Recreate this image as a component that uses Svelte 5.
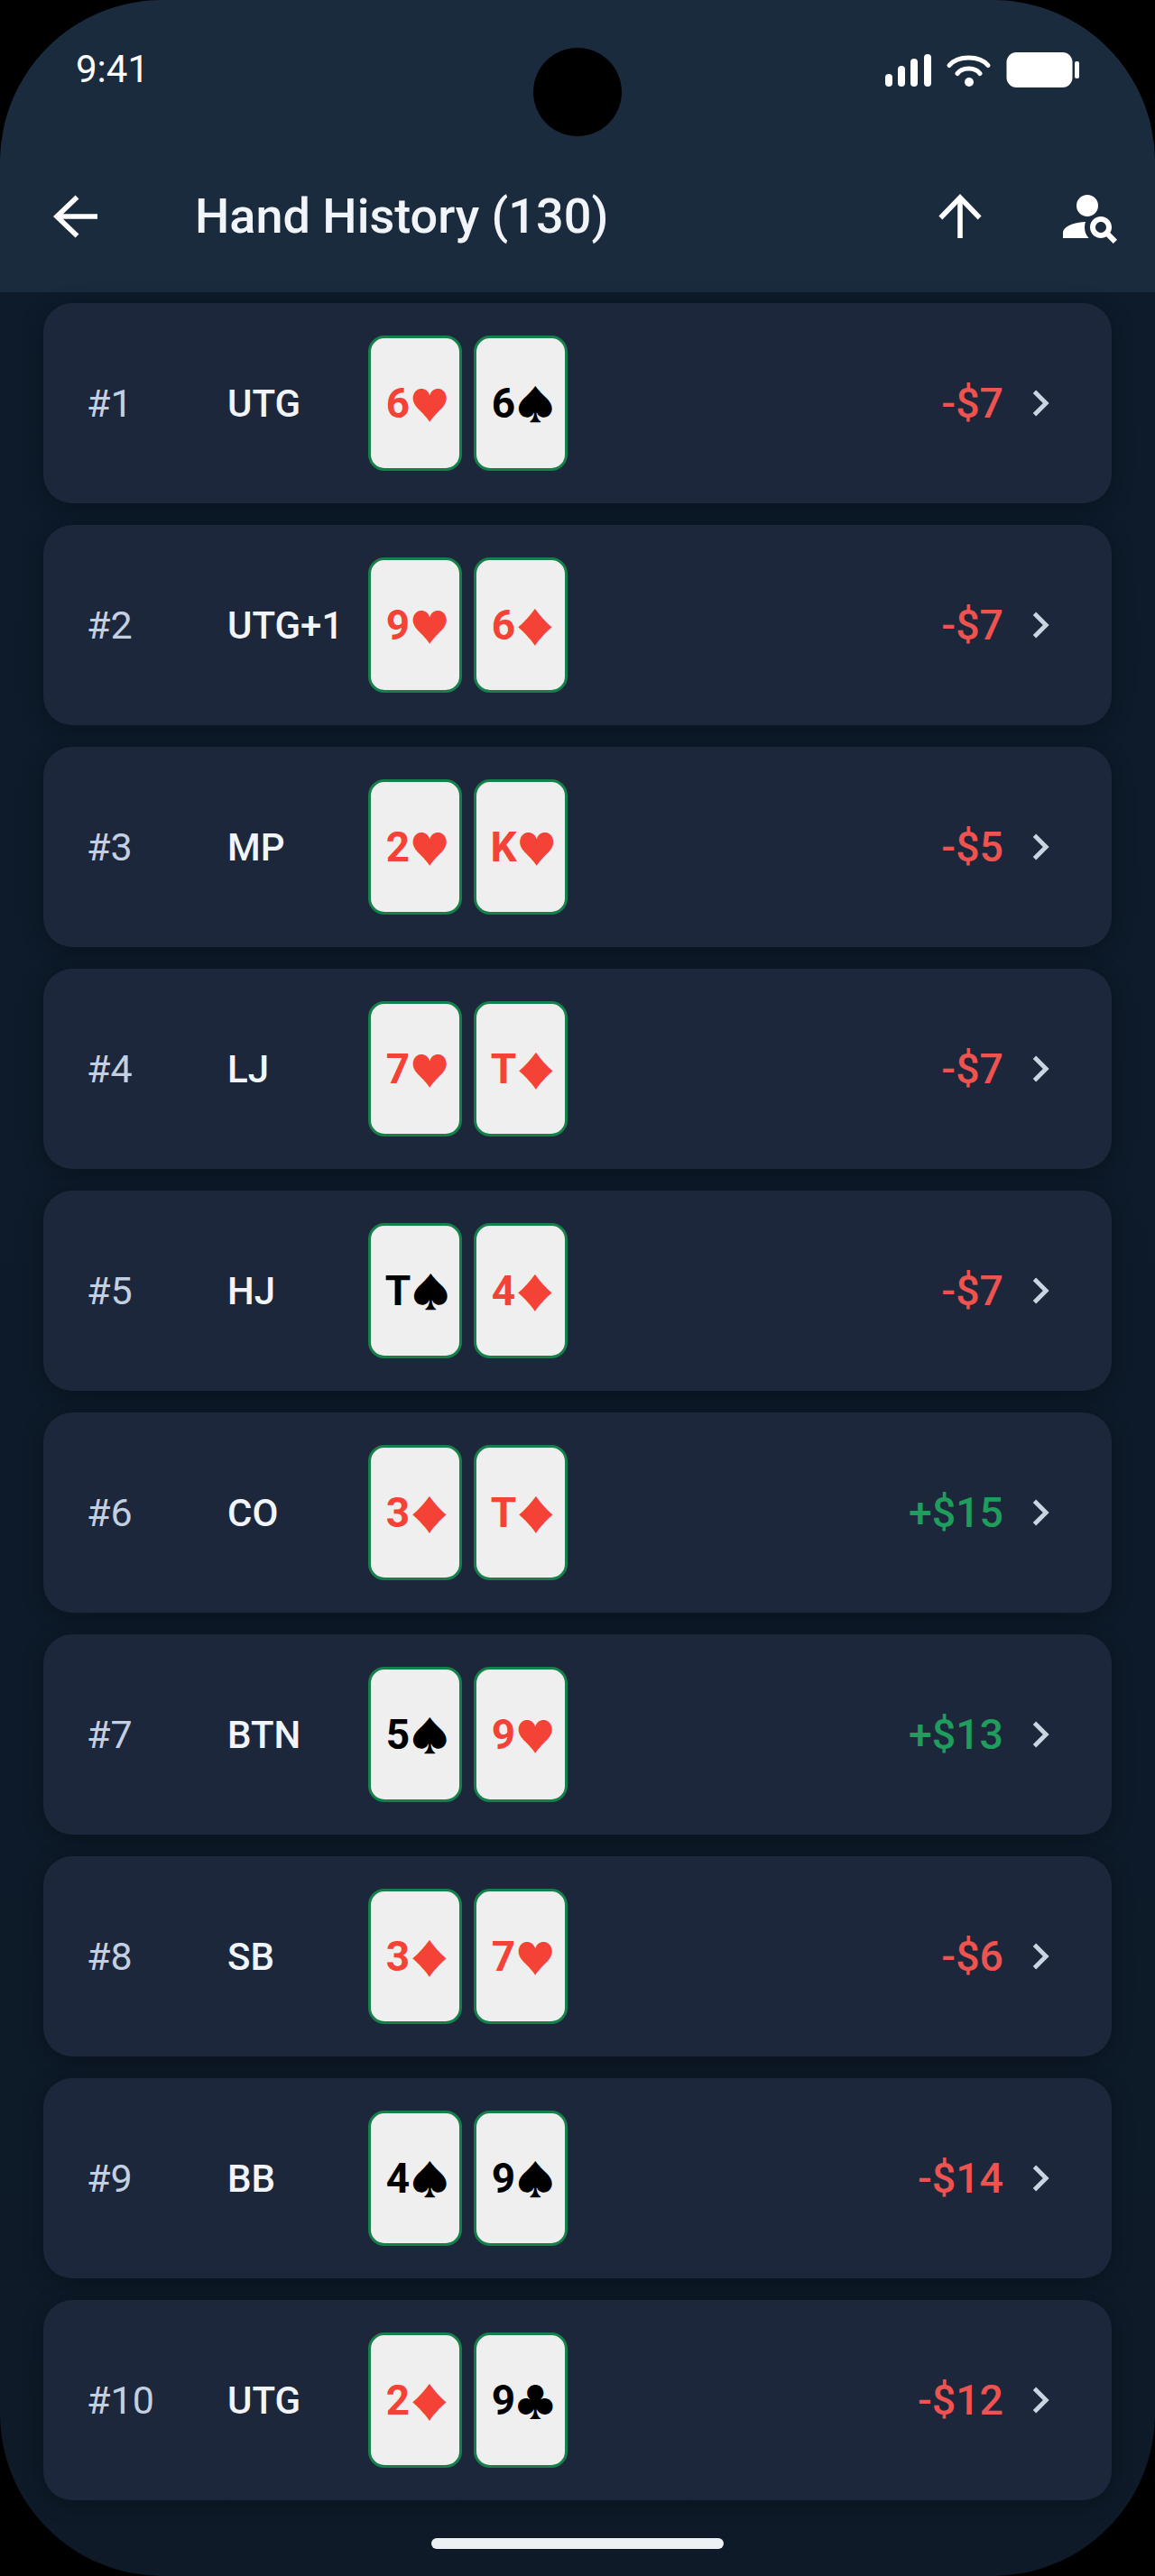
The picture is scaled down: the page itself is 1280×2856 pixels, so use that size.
<script lang="ts">
  const hands = [
    { pos: "UTG", cards: [["6", "♥"], ["6", "♠"]], amount: "-$7" },
    { pos: "UTG+1", cards: [["9", "♥"], ["6", "♦"]], amount: "-$7" },
    { pos: "MP", cards: [["2", "♥"], ["K", "♥"]], amount: "-$5" },
    { pos: "LJ", cards: [["7", "♥"], ["T", "♦"]], amount: "-$7" },
    { pos: "HJ", cards: [["T", "♠"], ["4", "♦"]], amount: "-$7" },
    { pos: "CO", cards: [["3", "♦"], ["T", "♦"]], amount: "+$15" },
    { pos: "BTN", cards: [["5", "♠"], ["9", "♥"]], amount: "+$13" },
    { pos: "SB", cards: [["3", "♦"], ["7", "♥"]], amount: "-$6" },
    { pos: "BB", cards: [["4", "♠"], ["9", "♠"]], amount: "-$14" },
    { pos: "UTG", cards: [["2", "♦"], ["9", "♣"]], amount: "-$12" }
  ];

  const isRed = (suit: string) => suit === "♥" || suit === "♦";
</script>

<div class="phone">
  <header class="header">
    <div class="status">
      <span class="time">9:41</span>
      <svg class="status-icons" width="215" height="40" viewBox="0 0 215 40" fill="#fff">
        <rect x="0" y="24" width="8" height="14" rx="4" />
        <rect x="14" y="15" width="8" height="23" rx="4" />
        <rect x="28" y="7" width="8" height="31" rx="4" />
        <rect x="43" y="2" width="8" height="36" rx="4" />
        <path d="M71 14.500C80 3 105 3 114 14.500" fill="none" stroke="#fff" stroke-width="5" stroke-linecap="round" />
        <path d="M80 23.500C85 16 100 16 105 23.500" fill="none" stroke="#fff" stroke-width="5" stroke-linecap="round" />
        <circle cx="93" cy="33" r="5" />
        <rect x="134.500" y="0" width="73" height="39" rx="11" />
        <rect x="210" y="10" width="5" height="19" rx="2" />
      </svg>
    </div>
    <div class="camera"></div>
    <div class="toolbar">
      <svg class="icon line" viewBox="0 0 24 24"><path d="M20 12H5M12.500 4.800 5 12l7.500 7.200" /></svg>
      <h1 class="title">Hand History (130)</h1>
      <svg class="icon line upload" viewBox="0 0 24 24"><path d="M12 20V5M4.800 12.500 12 5l7.200 7.500" /></svg>
      <svg class="icon search" viewBox="0 0 24 24">
        <path d="M11 12c2.210 0 4-1.790 4-4s-1.790-4-4-4-4 1.790-4 4 1.790 4 4 4z" />
        <path d="M10.350 14.010C7.620 13.910 2 15.270 2 18v2h9.540c-2.470-2.760-1.230-5.890-1.190-5.990z" />
        <path d="M19.430 18.020c.36-.59.57-1.280.57-2.020 0-2.210-1.790-4-4-4s-4 1.790-4 4 1.790 4 4 4c.74 0 1.430-.22 2.020-.57L20.590 22 22 20.590l-2.570-2.570zM16 18c-1.100 0-2-.9-2-2s.9-2 2-2 2 .9 2 2-.9 2-2 2z" />
      </svg>
    </div>
  </header>

  <main class="list">
    {#each hands as hand, i}
      <div class="row">
        <span class="num">#{i + 1}</span>
        <span class="pos">{hand.pos}</span>
        <div class="cards">
          {#each hand.cards as [rank, suit]}
            <div class="card" class:red={isRed(suit)}>{rank}<span class="suit" class:wide={suit === "♦"}>{suit}</span></div>
          {/each}
        </div>
        <span class="amount" class:win={hand.amount.startsWith("+")}>{hand.amount}</span>
        <svg class="chevron" viewBox="0 0 24 24"><path d="M10 6 8.590 7.410 13.170 12l-4.580 4.590L10 18l6-6z" /></svg>
      </div>
    {/each}
  </main>

  <div class="home"></div>
</div>

<style>
  :global(body) {
    background: #000;
  }

  .phone {
    position: relative;
    width: 1280px;
    height: 2856px;
    overflow: hidden;
    border-radius: 180px;
    background: linear-gradient(180deg, #0d1b2b 0%, #0e1a28 100%);
    font-family: Roboto, "DejaVu Sans", sans-serif;
  }

  .header {
    height: 324px;
    background: #1b2b3e;
  }

  .status {
    display: flex;
    justify-content: space-between;
    height: 204px;
    box-sizing: border-box;
    padding: 58px 84px 0 84px;
  }

  .time {
    color: #fff;
    font-size: 42px;
    line-height: 38px;
  }

  .camera {
    position: absolute;
    top: 53px;
    left: 591px;
    width: 98px;
    height: 98px;
    border-radius: 50%;
    background: #000;
  }

  .toolbar {
    display: flex;
    align-items: center;
    padding: 0 36px 0 48px;
  }

  .icon {
    width: 72px;
    height: 72px;
    fill: #fff;
    flex: none;
  }

  .line {
    fill: none;
    stroke: #fff;
    stroke-width: 1.85;
  }

  .title {
    margin: 0 0 0 96px;
    color: #f1f5f9;
    font-size: 54px;
    font-weight: 500;
    line-height: 72px;
  }

  .upload {
    margin-left: auto;
  }

  .search {
    margin-left: 72px;
  }

  .list {
    display: flex;
    flex-direction: column;
    gap: 24px;
    padding: 12px 48px 0;
  }

  .row {
    display: flex;
    align-items: center;
    height: 222px;
    padding: 0 50px 0 48px;
    border-radius: 32px;
    background: #1c273b;
    box-shadow: 0 4px 24px rgba(0, 0, 0, 0.3);
  }

  .num {
    width: 156px;
    flex: none;
    color: #c3d0e2;
    font-size: 43px;
  }

  .pos {
    width: 156px;
    flex: none;
    color: #f1f5f9;
    font-size: 42px;
    font-weight: 500;
  }

  .cards {
    display: flex;
    gap: 13px;
  }

  .card {
    display: flex;
    align-items: center;
    justify-content: center;
    width: 104px;
    height: 150px;
    box-sizing: border-box;
    padding-left: 6px;
    border: 3px solid #16804a;
    border-radius: 18px;
    background: #efefef;
    color: #000;
    font-size: 46px;
    font-weight: 700;
    white-space: nowrap;
  }

  .suit {
    font-family: "Noto Sans CJK JP", sans-serif;
    font-size: 44px;
    font-weight: 400;
  }

  .suit.wide {
    transform: scaleX(1.18);
  }

  .card.red {
    color: #f44336;
  }

  .amount {
    margin-left: auto;
    color: #ef5350;
    font-size: 46.500px;
    font-weight: 500;
  }

  .amount.win {
    color: #1f9d5c;
  }

  .chevron {
    width: 58px;
    height: 58px;
    margin-left: 12px;
    fill: #cbd5e1;
    flex: none;
  }

  .home {
    position: absolute;
    left: 478px;
    top: 2814px;
    width: 324px;
    height: 12px;
    border-radius: 6px;
    background: #eef1f4;
  }
</style>
